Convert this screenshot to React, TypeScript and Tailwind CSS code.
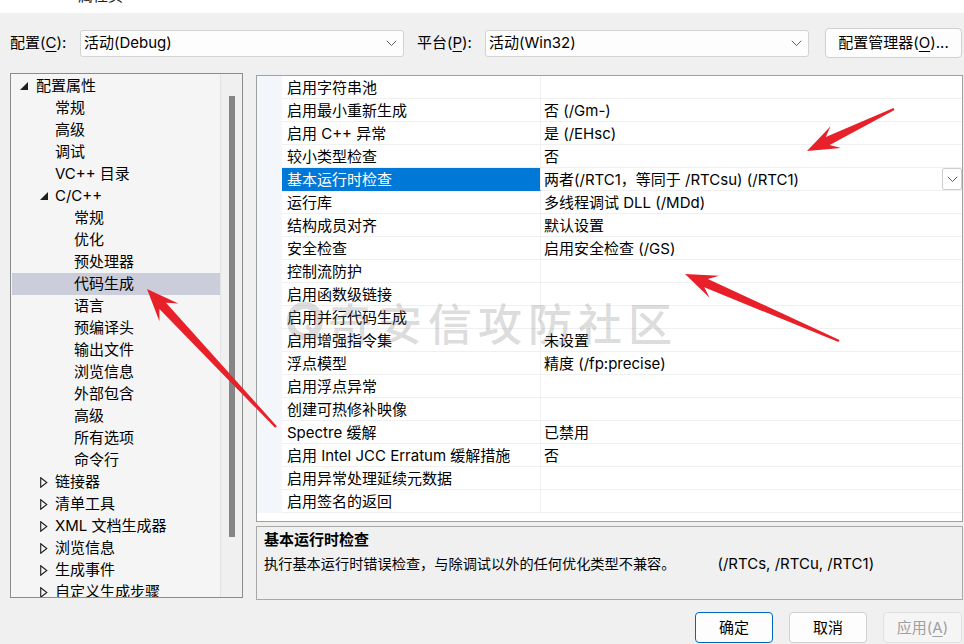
import React from "react";

type TreeItem = { label: string; level: 0 | 1 | 2; icon?: "open" | "closed"; selected?: boolean };

const tree: TreeItem[] = [
  { label: "配置属性", level: 0, icon: "open" },
  { label: "常规", level: 1 },
  { label: "高级", level: 1 },
  { label: "调试", level: 1 },
  { label: "VC++ 目录", level: 1 },
  { label: "C/C++", level: 1, icon: "open" },
  { label: "常规", level: 2 },
  { label: "优化", level: 2 },
  { label: "预处理器", level: 2 },
  { label: "代码生成", level: 2, selected: true },
  { label: "语言", level: 2 },
  { label: "预编译头", level: 2 },
  { label: "输出文件", level: 2 },
  { label: "浏览信息", level: 2 },
  { label: "外部包含", level: 2 },
  { label: "高级", level: 2 },
  { label: "所有选项", level: 2 },
  { label: "命令行", level: 2 },
  { label: "链接器", level: 1, icon: "closed" },
  { label: "清单工具", level: 1, icon: "closed" },
  { label: "XML 文档生成器", level: 1, icon: "closed" },
  { label: "浏览信息", level: 1, icon: "closed" },
  { label: "生成事件", level: 1, icon: "closed" },
  { label: "自定义生成步骤", level: 1, icon: "closed" },
];

const props: [string, string][] = [
  ["启用字符串池", ""],
  ["启用最小重新生成", "否 (/Gm-)"],
  ["启用 C++ 异常", "是 (/EHsc)"],
  ["较小类型检查", "否"],
  ["基本运行时检查", "两者(/RTC1，等同于 /RTCsu) (/RTC1)"],
  ["运行库", "多线程调试 DLL (/MDd)"],
  ["结构成员对齐", "默认设置"],
  ["安全检查", "启用安全检查 (/GS)"],
  ["控制流防护", ""],
  ["启用函数级链接", ""],
  ["启用并行代码生成", ""],
  ["启用增强指令集", "未设置"],
  ["浮点模型", "精度 (/fp:precise)"],
  ["启用浮点异常", ""],
  ["创建可热修补映像", ""],
  ["Spectre 缓解", "已禁用"],
  ["启用 Intel JCC Erratum 缓解措施", "否"],
  ["启用异常处理延续元数据", ""],
  ["启用签名的返回", ""],
];

function Chevron() {
  return (
    <svg width="11" height="7" viewBox="0 0 11 7">
      <polyline points="0.8,0.8 5.5,5.6 10.2,0.8" fill="none" stroke="#5f5f5f" strokeWidth="1" />
    </svg>
  );
}

function OpenTri() {
  return (
    <svg width="8" height="8" viewBox="0 0 8 8">
      <polygon points="8,0 8,8 0,8" fill="#1e1e1e" />
    </svg>
  );
}

function ClosedTri() {
  return (
    <svg width="8" height="11" viewBox="0 0 8 11">
      <polygon points="0.7,0.7 6.8,5.5 0.7,10.3" fill="none" stroke="#1e1e1e" strokeWidth="1.1" />
    </svg>
  );
}

function arrowPoints(tx: number, ty: number, px: number, py: number, L: number, W: number, sw: number) {
  const dx = px - tx;
  const dy = py - ty;
  const len = Math.hypot(dx, dy);
  const ux = dx / len;
  const uy = dy / len;
  const nx = -uy;
  const ny = ux;
  const bx = px - ux * L;
  const by = py - uy * L;
  const ix = px - ux * L * 0.72;
  const iy = py - uy * L * 0.72;
  const pts = [
    [tx + nx * 1.2, ty + ny * 1.2],
    [ix + nx * sw, iy + ny * sw],
    [bx + nx * W, by + ny * W],
    [px, py],
    [bx - nx * W, by - ny * W],
    [ix - nx * sw, iy - ny * sw],
    [tx - nx * 1.2, ty - ny * 1.2],
  ];
  return pts.map((p) => `${p[0].toFixed(1)},${p[1].toFixed(1)}`).join(" ");
}

function Underline({ ch }: { ch: string }) {
  return <span className="underline underline-offset-[3px] decoration-1">{ch}</span>;
}

export default function App() {
  return (
    <div className="relative w-[964px] h-[644px] overflow-hidden bg-[#f0f0f0] text-[15px] leading-[22px] text-[#000000] font-['Inter','Noto_Sans_CJK_SC',sans-serif]">
      {/* title strip */}
      <div className="h-[13px] bg-white overflow-hidden">
        <div className="pl-[78px] mt-[-15px] leading-[22px] text-[#202020]">属性页</div>
      </div>

      {/* config row */}
      <div className="flex items-center h-[30px] mt-[15px]">
        <div className="w-[80px] pl-[10px] shrink-0 whitespace-nowrap">
          配置(<Underline ch="C" />):
        </div>
        <div className="w-[324px] h-[27px] shrink-0 flex items-center justify-between rounded-[3px] border border-[#d3d3d3] bg-[#fdfdfd] pl-[3px] pr-[6px]">
          <span>活动(Debug)</span>
          <Chevron />
        </div>
        <div className="w-[68px] ml-[13px] shrink-0 whitespace-nowrap">
          平台(<Underline ch="P" />):
        </div>
        <div className="w-[324px] h-[27px] shrink-0 flex items-center justify-between rounded-[3px] border border-[#d3d3d3] bg-[#fdfdfd] pl-[3px] pr-[6px]">
          <span>活动(Win32)</span>
          <Chevron />
        </div>
        <div className="w-[137px] h-[30px] ml-[16px] shrink-0 flex items-center justify-center rounded-[4px] border border-[#d0d0d0] bg-[#fdfdfd] whitespace-nowrap">
          配置管理器(<Underline ch="O" />)...
        </div>
      </div>

      {/* main area */}
      <div className="flex mt-[15px] h-[527px]">
        {/* tree */}
        <div className="ml-[10px] w-[233px] h-[525px] shrink-0 border border-[#8c8c8c] flex overflow-hidden bg-[#f5f5f5]">
          <div className="w-[209px] pl-[1px] pt-[1px] shrink-0">
            {tree.map((t, i) => (
              <div
                key={i}
                className={
                  "h-[22px] flex items-center whitespace-nowrap " +
                  (t.selected ? "bg-[#cbcdda] " : "") +
                  (t.level === 0 ? "pl-[8px]" : t.level === 1 ? (t.icon ? "pl-[28px]" : "pl-[43px]") : "pl-[62px]")
                }
              >
                {t.icon && (
                  <span className={"flex items-center shrink-0 " + (t.level === 0 ? "w-[16px]" : "w-[15px]")}>
                    {t.icon === "open" ? <OpenTri /> : <ClosedTri />}
                  </span>
                )}
                <span>{t.label}</span>
              </div>
            ))}
          </div>
          <div className="w-[1px] shrink-0 bg-[#e2e2e2]" />
          <div className="w-[21px] shrink-0 bg-[#f0f0f0] flex justify-center">
            <div className="mt-[22px] w-[6px] h-[441px] bg-[#868686]" />
          </div>
        </div>

        {/* right column */}
        <div className="ml-[13px] w-[707px] shrink-0 mt-[2px] flex flex-col">
          <div className="h-[447px] border border-[#a0a0a0] bg-white">
            {props.map(([name, value], i) => {
              const sel = i === 4;
              return (
                <div key={i} className="flex h-[23px]">
                  <div className="w-[25px] shrink-0 bg-[#f3f6fb]" />
                  <div
                    className={
                      "w-[259px] shrink-0 border-r border-b border-[#f0f0f0] pl-[5px] pt-[1px] whitespace-nowrap leading-[21px] " +
                      (sel ? "bg-[#0078d7] text-white border-b-[#0078d7]" : "")
                    }
                  >
                    {name}
                  </div>
                  <div className="flex-1 border-b border-[#f0f0f0] pl-[3px] whitespace-nowrap flex justify-between">
                    <span className="pt-[1px] leading-[21px]">{value}</span>
                    {sel && (
                      <span className="w-[20px] h-[22px] shrink-0 flex items-center justify-center border border-[#cccccc] rounded-[2px] bg-white">
                        <Chevron />
                      </span>
                    )}
                  </div>
                </div>
              );
            })}
          </div>
          <div className="mt-[4px] h-[74px] border border-[#a8a8a8] bg-[#f0f0f0] px-[7px] pt-[1px]">
            <div className="font-bold leading-[24px]">基本运行时检查</div>
            <div className="leading-[24px] whitespace-nowrap text-[14.2px]">
              执行基本运行时错误检查，与除调试以外的任何优化类型不兼容。
              <span className="ml-[42px] text-[15px]">(/RTCs, /RTCu, /RTC1)</span>
            </div>
          </div>
        </div>
      </div>

      {/* buttons */}
      <div className="flex justify-end gap-[16px] pr-[2px] mt-[12px]">
        <div className="w-[78px] h-[31px] flex items-center justify-center rounded-[4px] border border-[#0067c0] bg-[#fdfdfd]">确定</div>
        <div className="w-[78px] h-[31px] flex items-center justify-center rounded-[4px] border border-[#d0d0d0] bg-[#fdfdfd]">取消</div>
        <div className="w-[79px] h-[31px] flex items-center justify-center rounded-[4px] border border-[#e0e0e0] bg-[#f5f5f5] text-[#a0a0a0]">
          应用(<Underline ch="A" />)
        </div>
      </div>

      {/* watermark */}
      <div className="absolute left-[284px] top-[298px] flex items-center pointer-events-none text-[rgba(120,120,120,0.26)]">
        <svg width="42" height="46" viewBox="0 0 42 46" className="mr-[2px]">
          <path d="M21 3 C10 3 3 11 3 22 C3 33 10 41 21 41 C25 41 28 40 31 38 L37 44 L40 41 L34 35 C37 31 39 27 39 22 C39 11 32 3 21 3 Z M21 10 C28 10 32 15 32 22 C32 25 31 28 29 30 L24 25 L21 28 L26 33 C24 34 23 34 21 34 C14 34 10 29 10 22 C10 15 14 10 21 10 Z" fill="rgba(120,120,120,0.26)" />
        </svg>
        <span className="text-[44px] leading-[48px] tracking-[6px] font-['Noto_Sans_CJK_SC',sans-serif] font-medium">奇安信攻防社区</span>
      </div>

      {/* red arrows */}
      <svg className="absolute left-0 top-0 pointer-events-none" width="964" height="644" viewBox="0 0 964 644">
        <polygon points={arrowPoints(276, 427, 147, 289, 32, 13, 4.5)} fill="#e8202a" />
        <polygon points={arrowPoints(894, 109, 807, 151, 32, 12, 4.5)} fill="#e8202a" />
        <polygon points={arrowPoints(839, 341, 685, 274, 32, 12, 4.5)} fill="#e8202a" />
      </svg>
    </div>
  );
}
